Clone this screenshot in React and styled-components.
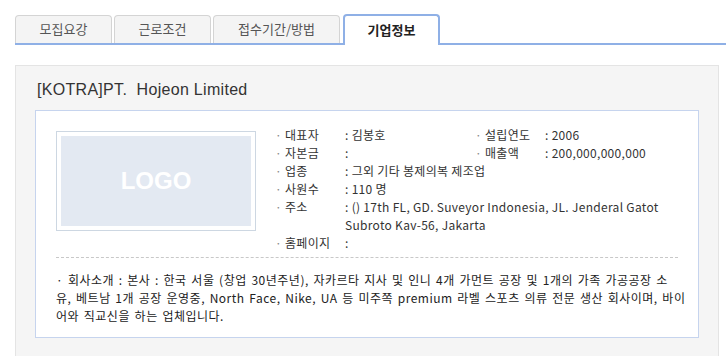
import React from 'react';
import styled, { createGlobalStyle } from 'styled-components';

const GlobalStyle = createGlobalStyle`
  body {
    margin: 0;
    background: #fff;
    font-family: "Noto Sans CJK KR", "Noto Sans", sans-serif;
    color: #333;
  }
`

const Page = styled.div`
  padding: 14px 0 0 15px;
`

const TabBar = styled.ul`
  display: flex;
  align-items: flex-end;
  gap: 2px;
  height: 29px;
  margin: 0;
  padding: 0;
  list-style: none;
  border-bottom: 2px solid #8fb0e6;
`

const Tab = styled.li`
  box-sizing: border-box;
  width: ${p => p.$w}px;
  height: ${p => (p.$active ? 31 : 28)}px;
  margin-bottom: ${p => (p.$active ? -2 : 0)}px;
  margin-left: ${p => (p.$active ? 1 : 0)}px;
  border: ${p => (p.$active ? '2px solid #8fb0e6' : '1px solid #d4d4d4')};
  border-bottom: none;
  border-radius: 4px 4px 0 0;
  background: ${p => (p.$active ? '#fff' : '#f4f4f4')};
  color: ${p => (p.$active ? '#222' : '#555')};
  font-size: 13px;
  font-weight: ${p => (p.$active ? 700 : 400)};
  text-align: center;
  line-height: ${p => (p.$active ? 28 : 26)}px;
`

const Panel = styled.section`
  box-sizing: border-box;
  width: 704px;
  margin-top: 20px;
  padding: 14px 19px 20px;
  background: #f5f5f5;
  border: 1px solid #e4e4e4;
`

const Title = styled.h2`
  margin: 0 0 10px 2px;
  font-family: "Liberation Sans", Arial, sans-serif;
  font-size: 16px;
  font-weight: 400;
  line-height: 20px;
  letter-spacing: 0.3px;
  color: #333;
  white-space: pre;
`

const InfoBox = styled.div`
  padding: 15px 20px 12px;
  background: #fff;
  border: 1px solid #c6d4ee;
`

const Top = styled.div`
  display: flex;
  gap: 19px;
`

const LogoFrame = styled.div`
  box-sizing: border-box;
  flex: none;
  width: 200px;
  height: 100px;
  margin-top: 5px;
  padding: 4px;
  border: 1px solid #cdd7e2;
`

const LogoFill = styled.div`
  display: flex;
  align-items: center;
  justify-content: center;
  height: 100%;
  background: #e3e9f2;
  color: #fff;
  font-family: "Liberation Sans", Arial, sans-serif;
  font-size: 24px;
  font-weight: 700;
`

const Facts = styled.div`
  flex: 1;
  font-size: 12px;
  line-height: 18px;
  letter-spacing: 0.3px;
`

const FactRow = styled.div`
  display: flex;
`

const Field = styled.div`
  display: flex;
  width: ${p => (p.$w ? `${p.$w}px` : 'auto')};
  flex: ${p => (p.$w ? 'none' : 1)};
`

const Bullet = styled.span`
  flex: none;
  width: 10px;
  color: #888;
`

const Label = styled.span`
  flex: none;
  width: 60px;
`

const Value = styled.span`
  flex: 1;
`

const Divider = styled.hr`
  margin: 5px 0 0;
  border: none;
  border-top: 1px dashed #c8c8c8;
`

const Intro = styled.p`
  margin: 13px 0 0;
  font-size: 12px;
  line-height: 18px;
  letter-spacing: 0.5px;
  word-spacing: 1.5px;
  white-space: nowrap;
  color: #222;
`

const Fact = ({ label, children, w }) => (
  <Field $w={w}>
    <Bullet>·</Bullet>
    <Label>{label}</Label>
    <Value>: {children}</Value>
  </Field>
)

const tabs = [
  { name: '모집요강', w: 97 },
  { name: '근로조건', w: 97 },
  { name: '접수기간/방법', w: 127 },
  { name: '기업정보', w: 97, active: true },
]

const App = () => {
  return (
    <Page>
      <GlobalStyle />
      <TabBar>
        {tabs.map(t => (
          <Tab key={t.name} $w={t.w} $active={t.active}>{t.name}</Tab>
        ))}
      </TabBar>
      <Panel>
        <Title>[KOTRA]PT.  Hojeon Limited</Title>
        <InfoBox>
          <Top>
            <LogoFrame>
              <LogoFill>LOGO</LogoFill>
            </LogoFrame>
            <Facts>
              <FactRow>
                <Fact w={200} label="대표자">김봉호</Fact>
                <Fact label="설립연도">2006</Fact>
              </FactRow>
              <FactRow>
                <Fact w={200} label="자본금" />
                <Fact label="매출액">200,000,000,000</Fact>
              </FactRow>
              <FactRow>
                <Fact label="업종">그외 기타 봉제의복 제조업</Fact>
              </FactRow>
              <FactRow>
                <Fact label="사원수">110 명</Fact>
              </FactRow>
              <FactRow>
                <Fact label="주소">
                  () 17th FL, GD. Suveyor Indonesia, JL. Jenderal Gatot<br />
                  Subroto Kav-56, Jakarta
                </Fact>
              </FactRow>
              <FactRow>
                <Fact label="홈페이지" />
              </FactRow>
            </Facts>
          </Top>
          <Divider />
          <Intro>
            · 회사소개 : 본사 : 한국 서울 (창업 30년주년), 자카르타 지사 및 인니 4개 가먼트 공장 및 1개의 가족 가공공장 소<br />
            유, 베트남 1개 공장 운영중, North Face, Nike, UA 등 미주쪽 premium 라벨 스포츠 의류 전문 생산 회사이며, 바이<br />
            어와 직교신을 하는 업체입니다.
          </Intro>
        </InfoBox>
      </Panel>
    </Page>
  )
}

export default App
